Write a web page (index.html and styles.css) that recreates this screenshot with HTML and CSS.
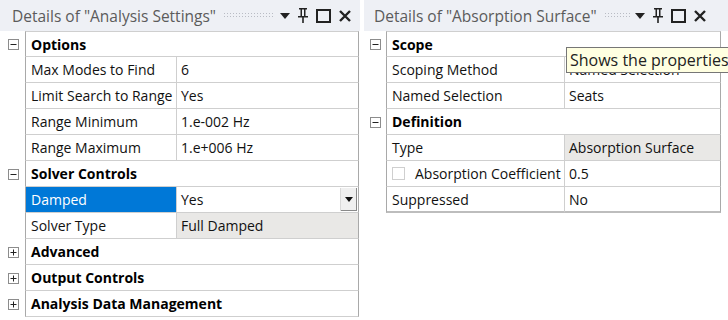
FILE: index.html
```html
<!DOCTYPE html>
<html>
<head>
<meta charset="utf-8">
<link rel="stylesheet" href="styles.css">
</head>
<body>
<div class="wrap">
  <section class="panel left">
    <div class="titlebar">
      <span class="title">Details of "Analysis Settings"</span>
      <span class="grip"></span>
      <span class="tb-icons">
        <svg width="10" height="6" viewBox="0 0 10 6"><path d="M0 0H10L5 6Z" fill="#222"/></svg>
        <svg width="10" height="15" viewBox="0 0 10 15"><path d="M1 0H9V1.5H7.5V8H10V9.5H5.8V15H4.2V9.5H0V8H2.5V1.5H1Z M4 1.5V8H6V1.5Z" fill="#222"/></svg>
        <svg width="15" height="14" viewBox="0 0 15 14"><rect x="1" y="1" width="13" height="12" fill="none" stroke="#222" stroke-width="2"/></svg>
        <svg width="12" height="12" viewBox="0 0 12 12"><path d="M1 1L11 11M11 1L1 11" stroke="#222" stroke-width="2.4"/></svg>
      </span>
    </div>
    <div class="grid">
      <div class="row head"><span class="exp"><svg width="11" height="11" viewBox="0 0 11 11"><rect x="0.5" y="0.5" width="10" height="10" fill="#fff" stroke="#8c8c8c"/><path d="M2.5 5.5H8.5" stroke="#222"/></svg></span><div class="hcell">Options</div></div>
      <div class="row"><span class="exp"></span><div class="lab">Max Modes to Find</div><div class="val">6</div></div>
      <div class="row"><span class="exp"></span><div class="lab">Limit Search to Range</div><div class="val">Yes</div></div>
      <div class="row"><span class="exp"></span><div class="lab">Range Minimum</div><div class="val">1.e-002 Hz</div></div>
      <div class="row"><span class="exp"></span><div class="lab">Range Maximum</div><div class="val">1.e+006 Hz</div></div>
      <div class="row head"><span class="exp"><svg width="11" height="11" viewBox="0 0 11 11"><rect x="0.5" y="0.5" width="10" height="10" fill="#fff" stroke="#8c8c8c"/><path d="M2.5 5.5H8.5" stroke="#222"/></svg></span><div class="hcell">Solver Controls</div></div>
      <div class="row"><span class="exp"></span><div class="lab sel">Damped</div><div class="val drop">Yes<span class="dbtn"><svg width="8" height="5" viewBox="0 0 8 5"><path d="M0 0H8L4 5Z" fill="#111"/></svg></span></div></div>
      <div class="row"><span class="exp"></span><div class="lab">Solver Type</div><div class="val ro">Full Damped</div></div>
      <div class="row head"><span class="exp"><svg width="11" height="11" viewBox="0 0 11 11"><rect x="0.5" y="0.5" width="10" height="10" fill="#fff" stroke="#8c8c8c"/><path d="M2.5 5.5H8.5M5.5 2.5V8.5" stroke="#222"/></svg></span><div class="hcell">Advanced</div></div>
      <div class="row head"><span class="exp"><svg width="11" height="11" viewBox="0 0 11 11"><rect x="0.5" y="0.5" width="10" height="10" fill="#fff" stroke="#8c8c8c"/><path d="M2.5 5.5H8.5M5.5 2.5V8.5" stroke="#222"/></svg></span><div class="hcell">Output Controls</div></div>
      <div class="row head"><span class="exp"><svg width="11" height="11" viewBox="0 0 11 11"><rect x="0.5" y="0.5" width="10" height="10" fill="#fff" stroke="#8c8c8c"/><path d="M2.5 5.5H8.5M5.5 2.5V8.5" stroke="#222"/></svg></span><div class="hcell">Analysis Data Management</div></div>
    </div>
  </section>
  <section class="panel right">
    <div class="titlebar">
      <span class="title">Details of "Absorption Surface"</span>
      <span class="grip short"></span>
      <span class="tb-icons">
        <svg width="10" height="6" viewBox="0 0 10 6"><path d="M0 0H10L5 6Z" fill="#222"/></svg>
        <svg width="10" height="15" viewBox="0 0 10 15"><path d="M1 0H9V1.5H7.5V8H10V9.5H5.8V15H4.2V9.5H0V8H2.5V1.5H1Z M4 1.5V8H6V1.5Z" fill="#222"/></svg>
        <svg width="15" height="14" viewBox="0 0 15 14"><rect x="1" y="1" width="13" height="12" fill="none" stroke="#222" stroke-width="2"/></svg>
        <svg width="12" height="12" viewBox="0 0 12 12"><path d="M1 1L11 11M11 1L1 11" stroke="#222" stroke-width="2.4"/></svg>
      </span>
    </div>
    <div class="grid">
      <div class="row head"><span class="exp"><svg width="11" height="11" viewBox="0 0 11 11"><rect x="0.5" y="0.5" width="10" height="10" fill="#fff" stroke="#8c8c8c"/><path d="M2.5 5.5H8.5" stroke="#222"/></svg></span><div class="hcell">Scope</div></div>
      <div class="row"><span class="exp"></span><div class="lab">Scoping Method</div><div class="val">Named Selection</div></div>
      <div class="row"><span class="exp"></span><div class="lab">Named Selection</div><div class="val">Seats</div></div>
      <div class="row head"><span class="exp"><svg width="11" height="11" viewBox="0 0 11 11"><rect x="0.5" y="0.5" width="10" height="10" fill="#fff" stroke="#8c8c8c"/><path d="M2.5 5.5H8.5" stroke="#222"/></svg></span><div class="hcell">Definition</div></div>
      <div class="row"><span class="exp"></span><div class="lab">Type</div><div class="val ro">Absorption Surface</div></div>
      <div class="row"><span class="exp"></span><div class="lab chk"><span class="cbox"></span>Absorption Coefficient</div><div class="val">0.5</div></div>
      <div class="row last"><span class="exp"></span><div class="lab">Suppressed</div><div class="val">No</div></div>
    </div>
    <div class="tooltip">Shows the properties</div>
  </section>
</div>
</body>
</html>
```

FILE: styles.css
```css
html, body {
  margin: 0;
  padding: 0;
  background: #ffffff;
}
body {
  font-family: "Open Sans", "Noto Sans", sans-serif;
  font-size: 14px;
  color: #111;
  width: 728px;
  height: 320px;
  overflow: hidden;
}
.wrap {
  display: flex;
  gap: 4px;
}
.panel {
  position: relative;
  display: flex;
  flex-direction: column;
}
.panel.left { width: 360px; }
.panel.right { width: 364px; }

.titlebar {
  height: 31px;
  background: #eef0f5;
  display: flex;
  align-items: center;
  padding-left: 12px;
  box-sizing: border-box;
}
.panel.right .titlebar { padding-left: 10px; }
.title {
  color: #5b5b5b;
  font-size: 15.5px;
  white-space: nowrap;
}
.grip {
  width: 52px;
  height: 7px;
  margin-left: 7px;
  background-image: radial-gradient(circle, #b9bcc4 0.7px, transparent 0.9px);
  background-size: 3px 3px;
}
.grip.short { width: 26px; margin-left: 7px; }
.tb-icons {
  display: flex;
  align-items: center;
  gap: 8px;
  margin-left: 5px;
}

.grid {
  display: flex;
  flex-direction: column;
}
.row {
  display: grid;
  height: 26px;
}
.panel.left .row { grid-template-columns: 25px 152px 182px; }
.panel.right .row { grid-template-columns: 22px 179px 156px; }
.row > div {
  border-bottom: 1px solid #cfcfcf;
  box-sizing: border-box;
  display: flex;
  align-items: center;
  white-space: nowrap;
  overflow: hidden;
}
.row .lab {
  border-left: 1px solid #a9a9a9;
  border-right: 1px solid #cfcfcf;
  padding-left: 5px;
}
.row .val {
  border-right: 1px solid #a9a9a9;
  padding-left: 4px;
}
.row .hcell {
  grid-column: 2 / 4;
  border-left: 1px solid #a9a9a9;
  border-right: 1px solid #a9a9a9;
  font-weight: 700;
  padding-left: 5px;
  color: #000;
}
.grid .row:first-child > div { border-top: 1px solid #cfcfcf; }
.row.last > div { border-bottom: 2px solid #bdbdbd; }

.exp {
  display: flex;
  align-items: center;
  justify-content: center;
}
.panel.left .exp { padding-left: 2px; }

.lab.sel {
  background: #0078d7;
  color: #fff;
}
.val.ro { background: #e9e8e6; }
.val.drop { position: relative; }
.dbtn {
  position: absolute;
  right: 1px;
  top: 1px;
  bottom: 1px;
  width: 16px;
  background: #f0f0f0;
  border-left: 1px solid #d9d9d9;
  box-shadow: inset -1px -1px 0 #8a8a8a;
  display: flex;
  align-items: center;
  justify-content: center;
}
.lab.chk { padding-left: 5px; }
.cbox {
  width: 13px;
  height: 13px;
  border: 1px solid #cfcfcf;
  box-sizing: border-box;
  margin-right: 10px;
  background: #fff;
}

.tooltip {
  position: absolute;
  left: 202px;
  top: 47px;
  right: -10px;
  height: 26px;
  box-sizing: border-box;
  padding: 0 3px;
  display: flex;
  align-items: center;
  background: #ffffe1;
  border: 1px solid #767676;
  font-size: 16px;
  color: #222;
  white-space: nowrap;
  overflow: hidden;
}
```
